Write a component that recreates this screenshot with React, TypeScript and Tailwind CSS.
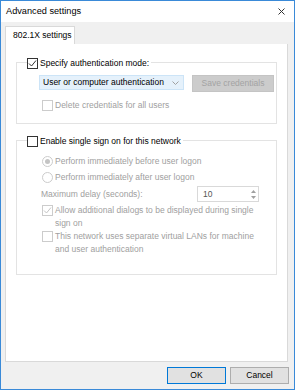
import React from "react";

const font = { fontFamily: '"Liberation Sans", Arial, sans-serif' };

function Check({ checked, disabled }: { checked?: boolean; disabled?: boolean }) {
  return (
    <div
      className={`w-[11px] h-[11px] shrink-0 border flex items-center justify-center ${
        disabled ? "border-[#cccccc] bg-white" : "border-[#333333] bg-white"
      }`}
    >
      {checked && (
        <svg width="9" height="9" viewBox="0 0 9 9">
          <path
            d="M1 4.5 L3.5 7 L8 1.5"
            fill="none"
            stroke={disabled ? "#c4c4c4" : "#333333"}
            strokeWidth="1"
          />
        </svg>
      )}
    </div>
  );
}

function Radio({ checked }: { checked?: boolean }) {
  return (
    <div className="w-[11px] h-[11px] shrink-0 rounded-full border border-[#cccccc] bg-white flex items-center justify-center">
      {checked && <div className="w-[5px] h-[5px] rounded-full bg-[#c4c4c4]" />}
    </div>
  );
}

export default function App() {
  return (
    <div
      className="w-[295px] h-[390px] border border-[#3a8ad8] bg-[#f0f0f0] flex flex-col text-[8.5px] text-[#000000] leading-none"
      style={font}
    >
      {/* Title bar */}
      <div className="h-[21px] bg-white flex items-center justify-between pl-[5px] pr-[9px]">
        <span className="text-[9.2px] text-[#000000]">Advanced settings</span>
        <svg width="7" height="7" viewBox="0 0 7 7">
          <path d="M0.5 0.5 L6.5 6.5 M6.5 0.5 L0.5 6.5" stroke="#333" strokeWidth="1" />
        </svg>
      </div>

      {/* Body */}
      <div className="flex-1 flex flex-col pl-[4px] pr-[6px] pt-[4px]">
        {/* Tab strip */}
        <div className="flex">
          <div className="h-[18px] w-[70px] bg-white border-t border-l border-r border-[#d9d9d9] flex items-center pl-[7px]">
            802.1X settings
          </div>
        </div>

        {/* Panel */}
        <div className="h-[318px] bg-white border border-[#d9d9d9] border-t-0 px-[10px] pt-[18px]">
          {/* Group 1 */}
          <div className="border border-[#e3e3e3] h-[62px]">
            <div className="-mt-[6px] ml-[10px] flex items-center gap-[2px] bg-white w-fit pr-[2px] h-[12px]">
              <Check checked />
              <span>Specify authentication mode:</span>
            </div>
            <div className="flex items-start mt-[6px] ml-[22px]">
              <div className="w-[145px] h-[15px] bg-[#e5f1fb] border border-[#cce4f7] flex items-center justify-between pl-[3px] pr-[4px]">
                <span>User or computer authentication</span>
                <svg width="7" height="4" viewBox="0 0 7 4">
                  <path d="M0.5 0.5 L3.5 3.5 L6.5 0.5" fill="none" stroke="#a0a0a0" strokeWidth="1" />
                </svg>
              </div>
              <div className="ml-[8px] w-[82px] h-[17px] bg-[#cccccc] border border-[#c4c4c4] flex items-center justify-center text-[#a3a3a3]">
                Save credentials
              </div>
            </div>
            <div className="flex items-center gap-[2px] mt-[8px] ml-[25px] text-[#a0a0a0]">
              <Check disabled />
              <span>Delete credentials for all users</span>
            </div>
          </div>

          {/* Group 2 */}
          <div className="border border-[#e3e3e3] h-[135px] mt-[16px]">
            <div className="-mt-[6px] ml-[10px] flex items-center gap-[2px] bg-white w-fit pr-[2px] h-[12px]">
              <Check />
              <span>Enable single sign on for this network</span>
            </div>
            <div className="ml-[25px] text-[#a0a0a0] flex flex-col">
              <div className="flex items-center gap-[2px] mt-[8px] h-[12px]">
                <Radio checked />
                <span>Perform immediately before user logon</span>
              </div>
              <div className="flex items-center gap-[2px] mt-[4px] h-[12px]">
                <Radio />
                <span>Perform immediately after user logon</span>
              </div>
              <div className="flex items-center justify-between mt-[3px] -ml-[1px] w-[218px]">
                <span>Maximum delay (seconds):</span>
                <div className="w-[62px] h-[16px] border border-[#d9d9d9] bg-white flex items-center justify-between pl-[5px] pr-[2px] text-[#555555]">
                  <span>10</span>
                  <div className="flex flex-col gap-[3px]">
                    <svg width="5" height="3" viewBox="0 0 5 3">
                      <path d="M0 3 L2.5 0 L5 3 Z" fill="#a0a0a0" />
                    </svg>
                    <svg width="5" height="3" viewBox="0 0 5 3">
                      <path d="M0 0 L2.5 3 L5 0 Z" fill="#a0a0a0" />
                    </svg>
                  </div>
                </div>
              </div>
              <div className="flex items-start gap-[2px] mt-[3px]">
                <Check checked disabled />
                <span className="leading-[13px] -mt-[1px] w-[210px]">
                  Allow additional dialogs to be displayed during single sign on
                </span>
              </div>
              <div className="flex items-start gap-[2px] mt-[1px]">
                <Check disabled />
                <span className="leading-[13px] -mt-[1px] w-[210px]">
                  This network uses separate virtual LANs for machine and user authentication
                </span>
              </div>
            </div>
          </div>
        </div>

        {/* Buttons */}
        <div className="flex justify-end gap-[4px] mt-[5px] mr-[-1px]">
          <div className="w-[59px] h-[17px] bg-[#e1e1e1] border border-[#0078d7] flex items-center justify-center">
            OK
          </div>
          <div className="w-[59px] h-[17px] bg-[#e1e1e1] border border-[#adadad] flex items-center justify-center">
            Cancel
          </div>
        </div>
      </div>
    </div>
  );
}
